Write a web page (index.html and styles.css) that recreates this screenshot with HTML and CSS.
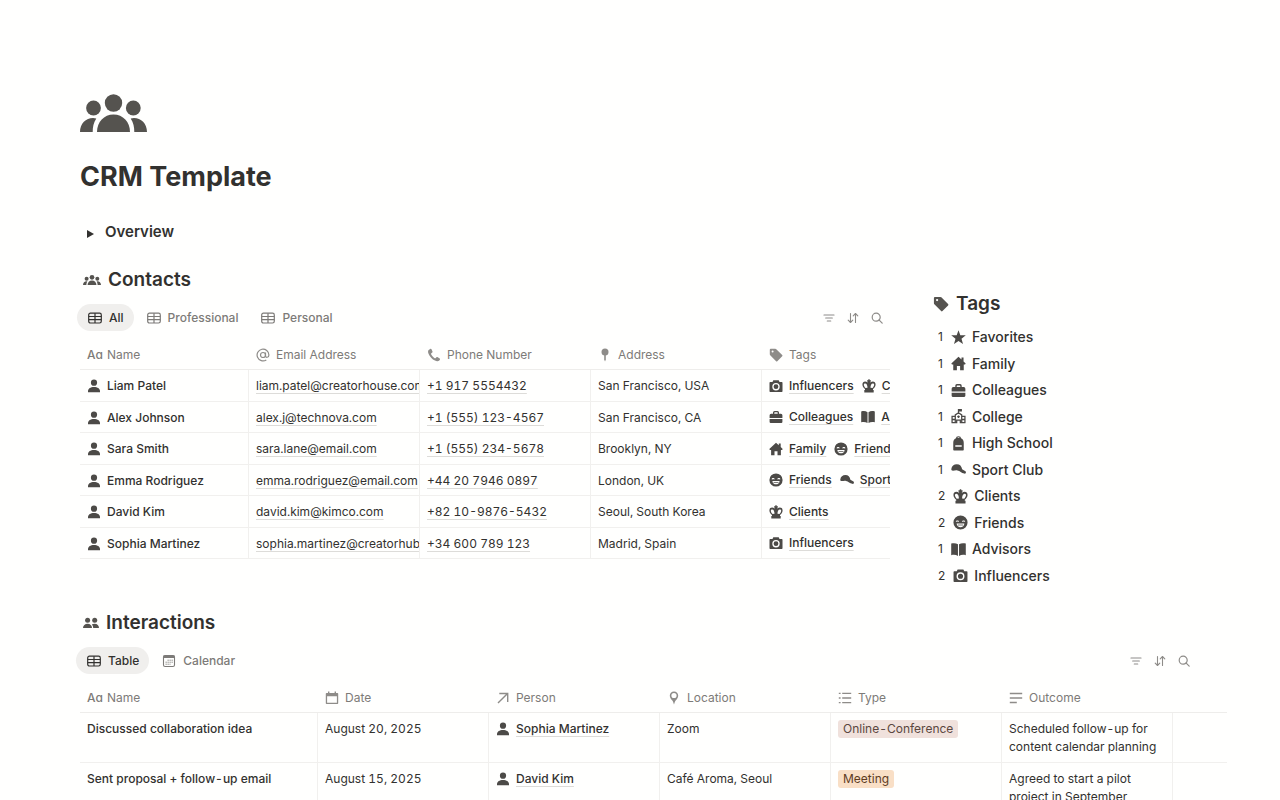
FILE: index.html
```html
<!DOCTYPE html>
<html lang="en">
<head>
<meta charset="utf-8">
<title>CRM Template</title>
<meta name="viewport" content="width=device-width, initial-scale=1">
<link rel="stylesheet" href="styles.css">
</head>
<body>
<svg class="sprite" aria-hidden="true">
  <symbol id="group" viewBox="0 0 67 38">
    <circle cx="33.500" cy="9" r="8.700"/><circle cx="13.500" cy="14" r="7.400"/><circle cx="53.300" cy="14" r="7.400"/>
    <path d="M17 38C17 28 24 20.500 33.500 20.500S50 28 50 38Z"/>
    <path d="M0 38C0 29.500 6 24 13 24q1.700 0 3.300.400C13.500 28.500 12.700 33 12.700 38Z"/>
    <path d="M67 38C67 29.500 61 24 54 24q-1.700 0-3.300.400C53.500 28.500 54.300 33 54.300 38Z"/>
  </symbol>
  <symbol id="pair" viewBox="0 0 16 11">
    <circle cx="4.600" cy="2.700" r="2.500"/><circle cx="11.700" cy="2.700" r="2.500"/>
    <path d="M0 10.500C0 8 2 6.300 4.600 6.300S9 8 9 10.500Z"/><path d="M8.800 7q1.200-.700 2.800-.700c2.600 0 4.400 1.700 4.400 4.200h-5.800C10.200 9 9.700 7.900 8.800 7Z"/>
  </symbol>
  <symbol id="person" viewBox="0 0 14 14"><circle cx="7" cy="3.700" r="3.100"/><path d="M1 13.300V12C1 9.500 3.500 7.900 7 7.900s6 1.600 6 4.100v1.300Z"/></symbol>
  <symbol id="grid" viewBox="0 0 14 14"><g fill="none" stroke="currentColor" stroke-width="1.200"><rect x=".7" y="2.200" width="12.600" height="9.800" rx="1.700"/><path d="M.7 5.500h12.600M.7 8.700h12.600M7 2.200v9.800"/></g></symbol>
  <symbol id="month" viewBox="0 0 14 14"><rect x="1.500" y="1.500" width="11" height="11" rx="1.600" fill="none" stroke="currentColor" stroke-width="1.100"/><path d="M1.500 1.500h11V4h-11z"/><path fill="none" stroke="currentColor" stroke-width=".9" stroke-dasharray="1.300 .7" d="M5.500 6.200h5.500M3.500 8.200H11M3.500 10.200h5"/></symbol>
  <symbol id="date" viewBox="0 0 14 14"><path fill-rule="evenodd" d="M3 .5h1.400V2h5.200V.5H11V2h1.500q.7 0 .7.700v9.600q0 .7-.7.700h-11q-.7 0-.7-.7V2.700q0-.7.700-.7H3ZM2.100 5.200v6.500h9.800V5.200Z"/></symbol>
  <symbol id="at" viewBox="0 0 14 14"><g fill="none" stroke="currentColor" stroke-width="1.200"><circle cx="7" cy="7" r="2.500"/><path d="M9.500 4.500v3.200c0 2.300 3.400 2.100 3.400-.7A5.900 5.900 0 1 0 10.300 11.900"/></g></symbol>
  <symbol id="phone" viewBox="0 0 14 14"><path d="M3.500.8 1.700 1.900C.6 2.700.8 4.900 2.600 7.700s4.700 5 7.400 5.600c1.400.300 2.300-.6 3-1.700q.3-.7-.3-1.100L10.400 9q-.6-.3-1 .2l-.8 1Q8 10.400 7 9.700 4.900 8.100 4.100 6.200q-.2-.6.200-.9l1-.8q.4-.4.200-.9L4.500 1.200Q4.100.5 3.500.8Z"/></symbol>
  <symbol id="pushpin" viewBox="0 0 14 14"><circle cx="7" cy="4" r="3.500"/><path d="M6.200 7h1.600v4.600L7 13.500l-.8-1.900Z"/></symbol>
  <symbol id="place" viewBox="0 0 14 14"><path fill-rule="evenodd" d="M7 .4C4.500.4 2.800 2.300 2.800 4.500c0 1.800.9 3.300 2.300 4.700.9 1 1.300 2.300 1.900 4.400.6-2.100 1-3.400 1.900-4.400 1.400-1.400 2.300-2.900 2.300-4.700C11.200 2.300 9.500.4 7 .4Zm0 1.500a2.600 2.600 0 1 1 0 5.200 2.600 2.600 0 0 1 0-5.200Z"/></symbol>
  <symbol id="tag" viewBox="0 0 14 14"><path fill-rule="evenodd" d="M.8 1.700q0-.9.900-.9h4.600q.6 0 1 .4l5.900 5.900q.6.6 0 1.200l-4.900 4.900q-.6.6-1.200 0L1.200 7.300q-.4-.4-.4-1ZM3.600 2.600a1 1 0 1 0 0 2 1 1 0 0 0 0-2Z"/></symbol>
  <symbol id="arrow" viewBox="0 0 14 14"><path fill="none" stroke="currentColor" stroke-width="1.400" d="m2 12 9.300-9.300M3.300 2.500h8.400v8.400"/></symbol>
  <symbol id="list" viewBox="0 0 14 14"><path fill="none" stroke="currentColor" stroke-width="1.300" d="M.8 2.300h1.800M4.200 2.300h9M.8 7h1.800M4.200 7h9M.8 11.700h1.800M4.200 11.700h9"/></symbol>
  <symbol id="lines" viewBox="0 0 14 14"><path fill="none" stroke="currentColor" stroke-width="1.400" d="M.8 2.500h12.400M.8 7h12.400M.8 11.500h7"/></symbol>
  <symbol id="filter" viewBox="0 0 14 14"><path fill="none" stroke="currentColor" stroke-width="1.200" stroke-linecap="round" d="M2 4h10M3.700 7h6.600M5.300 10h3.400"/></symbol>
  <symbol id="sort" viewBox="0 0 14 14"><path fill="none" stroke="currentColor" stroke-width="1.100" stroke-linecap="round" stroke-linejoin="round" d="M4.500 2.500v9M2.200 9.200l2.300 2.300 2.300-2.300M9.500 11.500v-9M7.200 4.800l2.300-2.300 2.300 2.300"/></symbol>
  <symbol id="search" viewBox="0 0 14 14"><g fill="none" stroke="currentColor" stroke-width="1.200" stroke-linecap="round"><circle cx="6.200" cy="6.200" r="4"/><path d="m9.200 9.200 3 3"/></g></symbol>
  <symbol id="star" viewBox="0 0 14 14"><path d="m7 .2 1.700 4.700 5.100.1-4 3.100 1.400 5L7 10.300l-4.200 2.800 1.400-5-4-3.100 5.100-.1Z"/></symbol>
  <symbol id="house" viewBox="0 0 14 14"><path d="m7 .7 2.800 2.600V1.500h1.900v3.600l2 2-.6.800h-1.200v5.300H8.500V9.300h-3v3.900H2.100V7.900H.9l-.6-.8Z"/></symbol>
  <symbol id="case" viewBox="0 0 14 14"><path fill-rule="evenodd" d="M4 3.800V2.500Q4 1 5.500 1h3Q10 1 10 2.500v1.300h1.900q1.500 0 1.500 1.500V8H.6V5.300q0-1.500 1.500-1.500Zm1.300 0h3.400V2.700q0-.4-.4-.4H5.700q-.4 0-.4.400Z"/><path d="M.6 9.100h12.800V12q0 1-1 1H1.600q-1 0-1-1Z"/></symbol>
  <symbol id="school" viewBox="0 0 14 14"><g fill="none" stroke="currentColor" stroke-width="1.200"><path d="M1 13V6.800h3V13M10 13V6.800h3V13M.5 12.800h4.800v-2.500h3.400v2.500h4.800M4 7V5.500l3-2 3 2V7M1 9.800h3M10 9.800h3M7 3.500V.6h2.600v1.200H7M7 6v2.300M5.800 7.200h2.400"/></g></symbol>
  <symbol id="bag" viewBox="0 0 14 14"><path fill-rule="evenodd" d="M4.600 2.200Q4.600.3 7 .3t2.400 1.900c1.700.8 2.500 2.200 2.500 4.200v6.500q0 .7-.7.700H2.800q-.7 0-.7-.7V6.400c0-2 .8-3.400 2.500-4.200ZM6 1.800h2q0-.6-1-.6t-1 .6ZM4 8.700v1.400h6V8.700Z"/></symbol>
  <symbol id="cap" viewBox="0 0 14 14"><path d="M.3 6.600C.6 3.500 2.700 2 5.400 2c2.900 0 4.500 1.700 5 4.800l3.100 1.800q.7.500.3 1.600-.4.900-1.400.6C9.600 10.200 8.500 8.400 6 7.900 4.200 7.500 2.700 8.300.9 8Q.2 7.700.3 6.600Z"/></symbol>
  <symbol id="crown" viewBox="0 0 14 14"><path fill-rule="evenodd" d="M6.300.2h1.400v1h1.200v1.300h-.6v1.100C10.600 1.800 13.600 2.500 13.600 5.500c0 2-1.500 3.500-2.600 4.500v1h.7v2.500H2.300V11H3v-1C1.900 9 .4 7.500.4 5.500c0-3 3-3.700 5.300-1.900V2.500h-.6V1.200h1.200ZM5.500 8.800C5.500 6.500 4.700 4.400 3.200 4.400 1 4.400 1.700 7.200 3.600 9Zm3 0 1.900.2c1.900-1.800 2.600-4.600.4-4.600C9.300 4.400 8.500 6.500 8.500 8.800Z"/></symbol>
  <symbol id="smile" viewBox="0 0 14 14"><path fill-rule="evenodd" d="M7 .4a6.600 6.600 0 1 0 0 13.200A6.600 6.600 0 0 0 7 .4ZM2.600 6.300C2.700 4.600 5.500 4.600 5.700 6.300l-.8.100q-.7-.7-1.500 0ZM8.300 6.300C8.500 4.600 11.300 4.600 11.400 6.300l-.8.100q-.7-.7-1.500 0ZM3.400 7.900h7.200c0 4.600-7.200 4.600-7.200 0Z"/><path d="M4.500 9h5v.7h-5z"/></symbol>
  <symbol id="book" viewBox="0 0 14 14"><path d="M.2 1.500C2.600.8 4.700 1 6.500 2.200V13C4.700 11.900 2.600 11.700.2 12.300ZM13.800 1.500C11.400.8 9.300 1 7.500 2.200V13c1.800-1.100 3.900-1.300 6.300-.7Z"/></symbol>
  <symbol id="camera" viewBox="0 0 14 14"><path fill-rule="evenodd" d="M4.300 1.300h5.400l.8 1.700h2.300q.7 0 .7.700v8.600q0 .7-.7.700H1.200q-.7 0-.7-.7V3.700q0-.7.700-.7h2.300ZM7 4a3.700 3.700 0 1 0 0 7.400A3.700 3.700 0 0 0 7 4Zm0 1.300a2.400 2.400 0 1 1 0 4.800 2.400 2.400 0 0 1 0-4.800Z"/></symbol>
</svg>

<main class="page">
  <svg class="page-icon"><use href="#group"/></svg>
  <h1 class="page-title">CRM Template</h1>
  <details class="overview"><summary><span class="caret"></span>Overview</summary></details>

  <div class="columns">
    <section class="contacts">
      <h2 class="heading"><svg class="heading-icon wide"><use href="#group"/></svg>Contacts</h2>
      <div class="views">
        <button class="view active"><svg class="icon"><use href="#grid"/></svg>All</button>
        <button class="view"><svg class="icon"><use href="#grid"/></svg>Professional</button>
        <button class="view"><svg class="icon"><use href="#grid"/></svg>Personal</button>
        <div class="tools">
          <button aria-label="Filter"><svg class="icon"><use href="#filter"/></svg></button>
          <button aria-label="Sort"><svg class="icon"><use href="#sort"/></svg></button>
          <button aria-label="Search"><svg class="icon"><use href="#search"/></svg></button>
        </div>
      </div>
      <div class="scroller">
      <table class="table contacts-table">
        <colgroup><col class="c-name"><col class="c-std"><col class="c-std"><col class="c-std"><col class="c-std"></colgroup>
        <thead><tr>
          <th><span class="label"><span class="aa">Aa</span>Name</span></th>
          <th><span class="label"><svg class="icon"><use href="#at"/></svg>Email Address</span></th>
          <th><span class="label"><svg class="icon"><use href="#phone"/></svg>Phone Number</span></th>
          <th><span class="label"><svg class="icon"><use href="#pushpin"/></svg>Address</span></th>
          <th><span class="label"><svg class="icon"><use href="#tag"/></svg>Tags</span></th>
        </tr></thead>
        <tbody>
          <tr><td><span class="item"><svg class="icon"><use href="#person"/></svg>Liam Patel</span></td><td><a href="#">liam.patel@creatorhouse.com</a></td><td><a href="#">+1 917 5554432</a></td><td>San Francisco, USA</td><td><span class="rels"><span class="item"><svg class="icon"><use href="#camera"/></svg><a href="#">Influencers</a></span><span class="item"><svg class="icon"><use href="#crown"/></svg><a href="#">Clients</a></span></span></td></tr>
          <tr><td><span class="item"><svg class="icon"><use href="#person"/></svg>Alex Johnson</span></td><td><a href="#">alex.j@technova.com</a></td><td><a href="#">+1 (555) 123-4567</a></td><td>San Francisco, CA</td><td><span class="rels"><span class="item"><svg class="icon"><use href="#case"/></svg><a href="#">Colleagues</a></span><span class="item"><svg class="icon"><use href="#book"/></svg><a href="#">Advisors</a></span></span></td></tr>
          <tr><td><span class="item"><svg class="icon"><use href="#person"/></svg>Sara Smith</span></td><td><a href="#">sara.lane@email.com</a></td><td><a href="#">+1 (555) 234-5678</a></td><td>Brooklyn, NY</td><td><span class="rels"><span class="item"><svg class="icon"><use href="#house"/></svg><a href="#">Family</a></span><span class="item"><svg class="icon"><use href="#smile"/></svg><a href="#">Friends</a></span></span></td></tr>
          <tr><td><span class="item"><svg class="icon"><use href="#person"/></svg>Emma Rodriguez</span></td><td><a href="#">emma.rodriguez@email.com</a></td><td><a href="#">+44 20 7946 0897</a></td><td>London, UK</td><td><span class="rels"><span class="item"><svg class="icon"><use href="#smile"/></svg><a href="#">Friends</a></span><span class="item"><svg class="icon"><use href="#cap"/></svg><a href="#">Sport Club</a></span></span></td></tr>
          <tr><td><span class="item"><svg class="icon"><use href="#person"/></svg>David Kim</span></td><td><a href="#">david.kim@kimco.com</a></td><td><a href="#">+82 10-9876-5432</a></td><td>Seoul, South Korea</td><td><span class="rels"><span class="item"><svg class="icon"><use href="#crown"/></svg><a href="#">Clients</a></span></span></td></tr>
          <tr><td><span class="item"><svg class="icon"><use href="#person"/></svg>Sophia Martinez</span></td><td><a href="#">sophia.martinez@creatorhub.com</a></td><td><a href="#">+34 600 789 123</a></td><td>Madrid, Spain</td><td><span class="rels"><span class="item"><svg class="icon"><use href="#camera"/></svg><a href="#">Influencers</a></span></span></td></tr>
        </tbody>
      </table>
      </div>
    </section>

    <aside class="tags">
      <h2 class="heading"><svg class="heading-icon"><use href="#tag"/></svg>Tags</h2>
      <ul class="tag-list">
        <li><span class="count">1</span><svg class="tag-icon"><use href="#star"/></svg>Favorites</li>
        <li><span class="count">1</span><svg class="tag-icon"><use href="#house"/></svg>Family</li>
        <li><span class="count">1</span><svg class="tag-icon"><use href="#case"/></svg>Colleagues</li>
        <li><span class="count">1</span><svg class="tag-icon"><use href="#school"/></svg>College</li>
        <li><span class="count">1</span><svg class="tag-icon"><use href="#bag"/></svg>High School</li>
        <li><span class="count">1</span><svg class="tag-icon"><use href="#cap"/></svg>Sport Club</li>
        <li><span class="count">2</span><svg class="tag-icon"><use href="#crown"/></svg>Clients</li>
        <li><span class="count">2</span><svg class="tag-icon"><use href="#smile"/></svg>Friends</li>
        <li><span class="count">1</span><svg class="tag-icon"><use href="#book"/></svg>Advisors</li>
        <li><span class="count">2</span><svg class="tag-icon"><use href="#camera"/></svg>Influencers</li>
      </ul>
    </aside>
  </div>

  <section class="interactions">
    <h2 class="heading"><svg class="heading-icon"><use href="#pair"/></svg>Interactions</h2>
    <div class="views">
      <button class="view active"><svg class="icon"><use href="#grid"/></svg>Table</button>
      <button class="view"><svg class="icon"><use href="#month"/></svg>Calendar</button>
      <div class="tools">
        <button aria-label="Filter"><svg class="icon"><use href="#filter"/></svg></button>
        <button aria-label="Sort"><svg class="icon"><use href="#sort"/></svg></button>
        <button aria-label="Search"><svg class="icon"><use href="#search"/></svg></button>
      </div>
    </div>
    <table class="table interactions-table">
      <colgroup><col class="c-title"><col class="c-std"><col class="c-std"><col class="c-std"><col class="c-std"><col class="c-std"><col></colgroup>
      <thead><tr>
        <th><span class="label"><span class="aa">Aa</span>Name</span></th>
        <th><span class="label"><svg class="icon"><use href="#date"/></svg>Date</span></th>
        <th><span class="label"><svg class="icon"><use href="#arrow"/></svg>Person</span></th>
        <th><span class="label"><svg class="icon"><use href="#place"/></svg>Location</span></th>
        <th><span class="label"><svg class="icon"><use href="#list"/></svg>Type</span></th>
        <th><span class="label"><svg class="icon"><use href="#lines"/></svg>Outcome</span></th>
        <th></th>
      </tr></thead>
      <tbody>
        <tr><td class="title">Discussed collaboration idea</td><td>August 20, 2025</td><td><span class="item"><svg class="icon"><use href="#person"/></svg><a href="#">Sophia Martinez</a></span></td><td>Zoom</td><td><span class="chip rose">Online-Conference</span></td><td>Scheduled follow-up for content calendar planning</td><td></td></tr>
        <tr><td class="title">Sent proposal + follow-up email</td><td>August 15, 2025</td><td><span class="item"><svg class="icon"><use href="#person"/></svg><a href="#">David Kim</a></span></td><td>Café Aroma, Seoul</td><td><span class="chip orange">Meeting</span></td><td>Agreed to start a pilot project in September</td><td></td></tr>
      </tbody>
    </table>
  </section>
</main>
</body>
</html>
```
FILE: styles.css
```css
* { box-sizing: border-box; }
body {
  margin: 0;
  background: #fffffe;
  color: #32312f;
  font-family: Inter, "Liberation Sans", sans-serif;
  font-size: 12px;
  line-height: 18px;
}
svg { display: block; fill: currentColor; flex: none; }
a { color: inherit; text-decoration: underline 1px #dddcd9; text-underline-offset: 3px; text-decoration-skip-ink: none; }
button { font: inherit; color: inherit; background: none; border: 0; padding: 0; cursor: pointer; }
.sprite { position: absolute; width: 0; height: 0; }
.page { padding: 94px 80px 0; }
.page-icon { width: 67px; height: 38px; color: #55534f; }
.page-title { margin: 27px 0 0; font-size: 27px; line-height: 36px; font-weight: 700; }
.overview { margin-top: 26px; font-size: 15px; line-height: 22px; font-weight: 600; }
.overview summary { display: flex; align-items: center; gap: 11px; padding-left: 7px; list-style: none; cursor: pointer; }
.caret { margin-top: 3px; border-left: 7px solid #32312f; border-top: 4px solid transparent; border-bottom: 4px solid transparent; }
.columns { display: grid; grid-template-columns: minmax(0, 3fr) minmax(0, 1fr); gap: 40px; margin-top: 24px; }
.heading { display: flex; align-items: center; gap: 7px; margin: 0; padding-left: 3px; font-size: 19px; line-height: 26px; font-weight: 600; }
.heading-icon { width: 16px; height: 16px; color: #55534f; }
.heading-icon.wide { width: 18px; }

.views { display: flex; align-items: center; gap: 2px; margin: 11px 0 0 -3px; }
.view { display: flex; align-items: center; gap: 7px; height: 27px; padding: 0 10px 0 11px; border-radius: 14px; color: #7d7b78; font-weight: 500; }
.view.active { background: #f0efed; color: #32312f; }
.icon { width: 14px; height: 14px; }
.tools { display: flex; gap: 10px; margin-left: auto; padding-right: 6px; color: #8e8c89; }

.scroller { overflow: hidden; }
.table { table-layout: fixed; border-collapse: separate; border-spacing: 0; font-variant-numeric: tabular-nums; }
.contacts-table { width: 853px; margin-top: 7px; }
.c-name { width: 169px; }
.c-std { width: 171px; }
.c-title { width: 238px; }
th { height: 32px; padding: 2px 7px 0; border-bottom: 1px solid #eeedeb; font-weight: 400; text-align: left; }
.label, .item { display: flex; align-items: center; gap: 6px; }
.label { color: #7d7b78; }
.label .icon { color: #8e8c89; }
.aa { width: 14px; font-weight: 500; font-feature-settings: "cv11"; }
td { padding: 0 7px; border-bottom: 1px solid #f1f0ee; border-right: 1px solid #f1f0ee; overflow: hidden; }
td:last-child { border-right: 0; }
.item { font-weight: 500; }
.item .icon { color: #4c4a47; }
.contacts-table td { height: 32px; padding-top: 1px; white-space: nowrap; }
.contacts-table td:last-child { padding-top: 0; }
.contacts-table tr:nth-child(even) td { height: 31px; }
.rels { display: flex; gap: 8px; }

.tags { padding-top: 24px; }
.tag-list { margin: 7px 0 0; padding: 0 0 0 8px; list-style: none; font-size: 14px; font-weight: 500; }
.tag-list li { display: flex; align-items: center; height: 26px; }
.tag-list li:nth-child(even) { height: 27px; }
.count { margin-right: 8px; font-size: 12px; font-weight: 400; }
.tag-icon { width: 15px; height: 15px; margin-right: 6px; color: #4c4a47; }

.interactions { margin-top: 21px; }
.interactions .views { margin-left: -4px; }
.interactions .tools { padding-right: 9px; }
.interactions-table { width: calc(100% + 27px); margin-top: 7px; }
.interactions-table td { height: 50px; padding: 7px 7px 6px; vertical-align: top; }
.title { font-weight: 500; }
.chip { display: inline-block; padding: 0 5px; border-radius: 3px; }
.rose { background: #f0e1dc; color: #5b4740; }
.orange { background: #f9dfc6; color: #5e3c1f; }
```
